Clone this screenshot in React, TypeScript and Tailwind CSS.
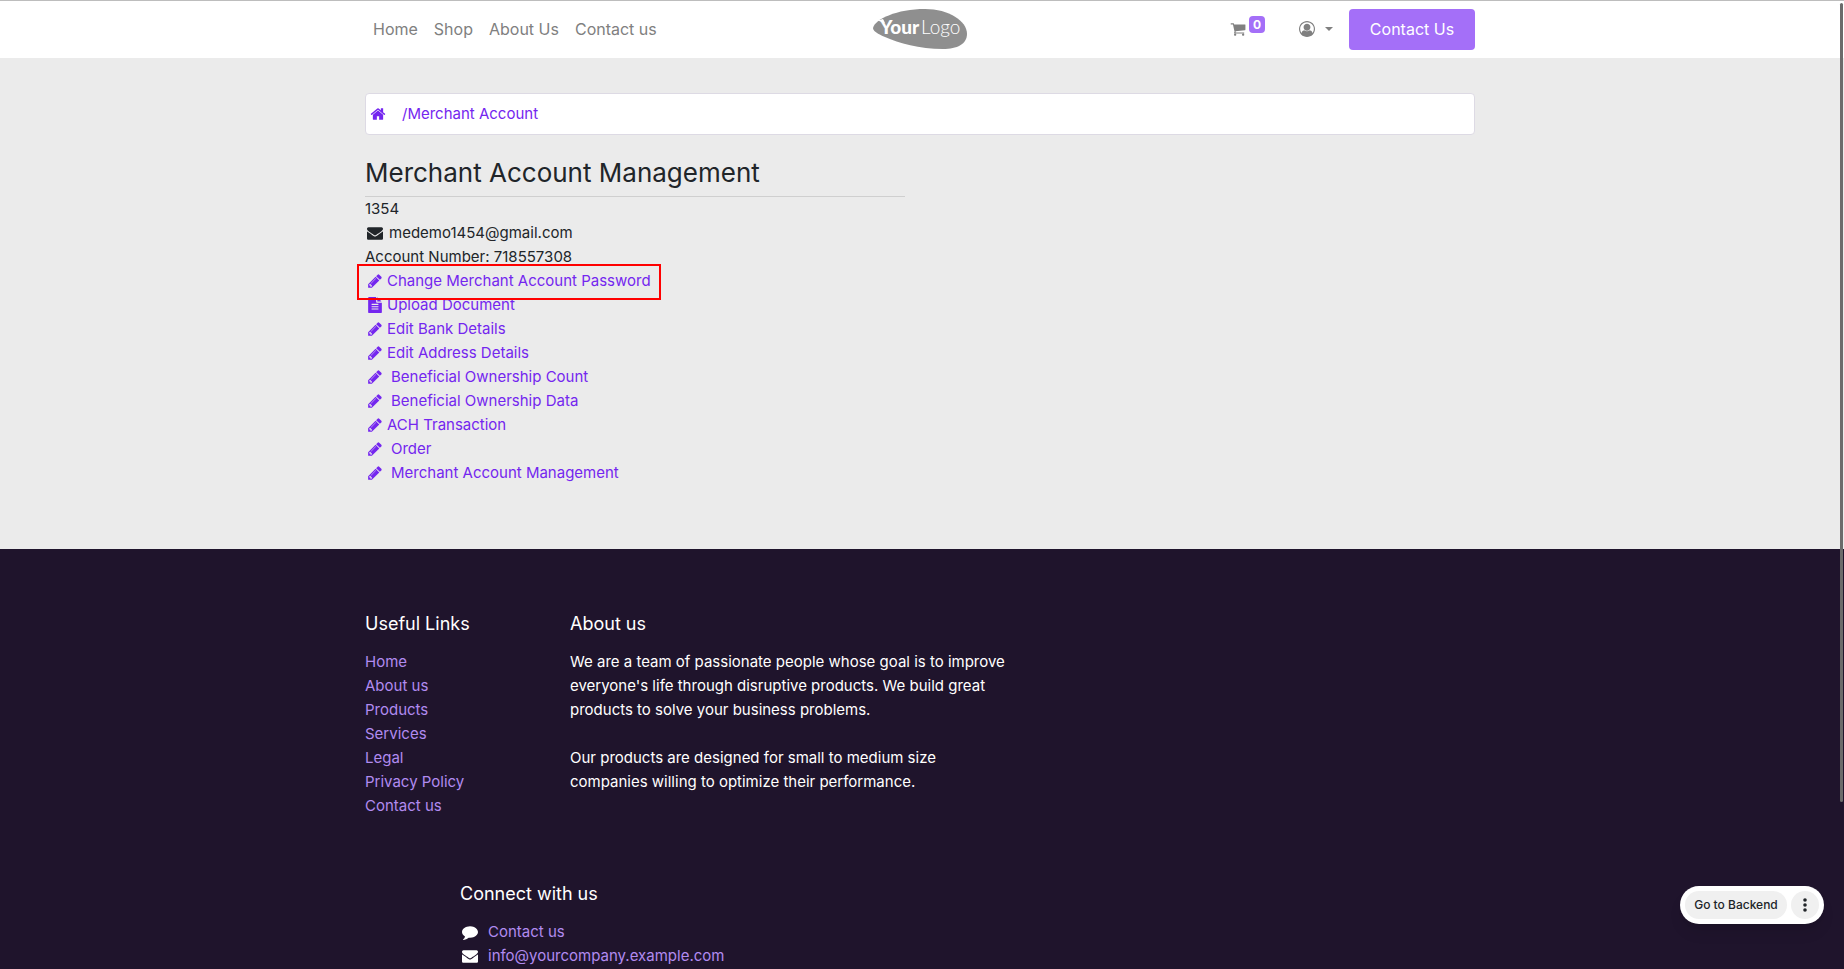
import type { ReactNode } from "react";

const ICONS = {
  cart: "M704 1536q0 52-38 90t-90 38-90-38-38-90 38-90 90-38 90 38 38 90zm896 0q0 52-38 90t-90 38-90-38-38-90 38-90 90-38 90 38 38 90zm128-1088v512q0 24-16.500 42.500t-40.500 21.500l-1044 122q13 60 13 70 0 16-24 64h920q26 0 45 19t19 45-19 45-45 19h-1024q-26 0-45-19t-19-45q0-11 8-31.500t16-36 21.500-40 15.500-29.500l-177-823h-204q-26 0-45-19t-19-45 19-45 45-19h256q16 0 28.500 6.500t19.500 15.500 13 24.500 8 26 5.500 29.500 4.500 26h1201q26 0 45 19t19 45z",
  home: "M1472 992v480q0 26-19 45t-45 19h-384v-384h-256v384h-384q-26 0-45-19t-19-45v-480q0-1 .5-3t.5-3l575-474 575 474q1 2 1 6zm223-69l-62 74q-8 9-21 11h-3q-13 0-21-7l-692-577-692 577q-12 8-24 7-13-2-21-11l-62-74q-8-10-7-23.500t11-21.500l719-599q32-26 76-26t76 26l244 204v-195q0-14 9-23t23-9h192q14 0 23 9t9 23v408l219 182q10 8 11 21.500t-7 23.500z",
  pencil: "M491 1536l91-91-235-235-91 91v107h128v128h107zm523-928q0-22-22-22-10 0-17 7l-542 542q-7 7-7 17 0 22 22 22 10 0 17-7l542-542q7-7 7-17zm-54-192l416 416-832 832h-416v-416zm683 96q0 53-37 90l-166 166-416-416 166-165q36-38 90-38 53 0 91 38l235 234q37 39 37 91z",
  envelope: "M1792 710v794q0 66-47 113t-113 47h-1472q-66 0-113-47t-47-113v-794q44 49 101 87 362 246 497 345 57 42 92.500 65.500t94.500 48 110 24.500h2q51 0 110-24.500t94.500-48 92.500-65.500q170-123 498-345 57-39 100-87zm0-294q0 79-49 151t-122 123q-376 261-468 325-10 7-42.500 30.500t-54 38-52 32.500-57.500 27-50 9h-2q-23 0-50-9t-57.500-27-52-32.500-54-38-42.500-30.500q-91-64-262-182.500t-205-142.500q-62-42-117-115.500t-55-136.500q0-78 41.500-130t118.500-52h1472q65 0 112.500 47t47.500 113z",
  file: "M1596 476q14 14 28 36h-472v-472q22 14 36 28zm-476 164h544v1056q0 40-28 68t-68 28h-1344q-40 0-68-28t-28-68v-1600q0-40 28-68t68-28h800v544q0 40 28 68t68 28zm160 736v-64q0-14-9-23t-23-9h-704q-14 0-23 9t-9 23v64q0 14 9 23t23 9h704q14 0 23-9t9-23zm0-256v-64q0-14-9-23t-23-9h-704q-14 0-23 9t-9 23v64q0 14 9 23t23 9h704q14 0 23-9t9-23zm0-256v-64q0-14-9-23t-23-9h-704q-14 0-23 9t-9 23v64q0 14 9 23t23 9h704q14 0 23-9t9-23z",
  comment: "M1792 896q0 174-120 321.500t-326 233-450 85.500q-70 0-145-8-198 175-460 242-49 14-114 22-17 2-30.500-9t-17.500-29v-1q-3-4-.5-12t2-10 4.500-9.500l6-9 7-8.500 8-9q7-8 31-34.500t34.500-38 31-39.500 32.500-51 27-59 26-76q-157-89-247.500-220t-90.500-281q0-130 71-248.500t191-204.500 286-136.500 348-50.500q244 0 450 85.500t326 233 120 321.500z",
  user: "M896 0q182 0 348 71t286 191 191 286 71 348q0 181-70.500 347t-190.500 286-286 191.500-349 71.500-349-71-285.500-191.500-190.500-286-71-347.500 71-348 191-286 286-191 348-71zm619 1351q149-205 149-455 0-156-61-298t-164-245-245-164-298-61-298 61-245 164-164 245-61 298q0 250 149 455 66-327 306-327 131 128 313 128t313-128q240 0 306 327zm-235-647q0-159-112.500-271.500t-271.500-112.500-271.500 112.500-112.500 271.500 112.500 271.500 271.500 112.500 271.500-112.500 112.500-271.500z",
};

type IconName = keyof typeof ICONS;

function Icon({ name }: { name: IconName }) {
  return (
    <svg viewBox="0 0 1792 1792" fill="currentColor" aria-hidden="true" className="size-4 shrink-0">
      <path d={ICONS[name]} />
    </svg>
  );
}

function IconSlot({ name }: { name: IconName }) {
  return (
    <span className="mr-0.5 flex w-5 shrink-0 justify-center">
      <Icon name={name} />
    </span>
  );
}

function Container({ children, className = "" }: { children: ReactNode; className?: string }) {
  return <div className={`mx-auto w-full max-w-[1140px] px-[15px] ${className}`}>{children}</div>;
}

function Logo() {
  return (
    <svg viewBox="0 0 94 40" className="h-10 w-[94px]" role="img" aria-label="Your Logo">
      <path
        d="M0 19C2 10 24 0 52 0C76 0 94 12 94 25C94 35 84 40 70 40C46 40 26 34 12 28C5 25 0 22 0 19Z"
        fill="#8f8f8f"
      />
      <path d="M3 12L10 10L12 14L6 12Z" fill="#fff" />
      <text x="7" y="25" fontSize="19" fontWeight="900" fill="#fff" fontFamily="Lato, sans-serif">
        Your
      </text>
      <text x="48" y="25" fontSize="19" fontWeight="300" fill="#fff" fontFamily="Lato, sans-serif">
        Logo
      </text>
    </svg>
  );
}

const NAV = ["Home", "Shop", "About Us", "Contact us"];

const ACTIONS: { label: string; icon: IconName; spaced?: boolean; marked?: boolean }[] = [
  { label: "Change Merchant Account Password", icon: "pencil", marked: true },
  { label: "Upload Document", icon: "file" },
  { label: "Edit Bank Details", icon: "pencil" },
  { label: "Edit Address Details", icon: "pencil" },
  { label: "Beneficial Ownership Count", icon: "pencil", spaced: true },
  { label: "Beneficial Ownership Data", icon: "pencil", spaced: true },
  { label: "ACH Transaction", icon: "pencil" },
  { label: "Order", icon: "pencil", spaced: true },
  { label: "Merchant Account Management", icon: "pencil", spaced: true },
];

const FOOTER_LINKS = ["Home", "About us", "Products", "Services", "Legal", "Privacy Policy", "Contact us"];

function Header() {
  return (
    <header className="border-t border-[#bdbdbd] bg-white pr-1 text-base">
      <Container className="grid h-[57px] grid-cols-[1fr_auto_1fr] items-center">
        <nav className="flex pb-0.5 text-[#808080]">
          {NAV.map((item) => (
            <a key={item} href="#" className="px-2">
              {item}
            </a>
          ))}
        </nav>
        <a href="#" className="flex pb-0.5">
          <Logo />
        </a>
        <div className="flex items-center justify-end text-[#808080]">
          <a href="#" aria-label="Cart" className="flex items-center gap-[3px] pr-[34px] pb-0.5">
            <Icon name="cart" />
            <span className="mb-2 flex h-[17px] w-4 items-center justify-center rounded bg-[#a46ff8] text-xs font-bold text-white">
              0
            </span>
          </a>
          <button type="button" aria-label="Account" className="flex items-center gap-[10px] pr-4 pb-0.5">
            <Icon name="user" />
            <svg viewBox="0 0 8 4" className="h-1 w-2" fill="currentColor" aria-hidden="true">
              <path d="M0 0H8L4 4Z" />
            </svg>
          </button>
          <a
            href="#"
            className="flex h-[41px] w-[126px] items-center justify-center rounded-[4px] bg-[#a46ff8] pb-0.5 text-white"
          >
            Contact Us
          </a>
        </div>
      </Container>
    </header>
  );
}

function Main() {
  return (
    <main className="bg-[#ebebeb] pt-[35px] pr-1 pb-16">
      <Container>
        <nav
          aria-label="Breadcrumb"
          className="flex h-[42px] items-center gap-4 rounded-[4px] border border-[#dddae4] bg-white px-1 text-[#7426ef]"
        >
          <a href="#" aria-label="Home">
            <Icon name="home" />
          </a>
          <a href="#">/Merchant Account</a>
        </nav>
        <section className="w-[540px] max-w-full pt-5">
          <h1 className="border-b border-[#cfcfcf] pb-[5px] text-[26px] leading-9">Merchant Account Management</h1>
          <p>1354</p>
          <p className="flex items-center gap-0.5">
            <IconSlot name="envelope" />
            medemo1454@gmail.com
          </p>
          <p>Account Number: 718557308</p>
          <ul className="text-[#7426ef]">
            {ACTIONS.map(({ label, icon, spaced, marked }) => (
              <li key={label} className="flex">
                <a href="#" className={`relative flex items-center ${spaced ? "gap-1" : ""}`}>
                  <IconSlot name={icon} />
                  {label}
                  {marked && (
                    <span className="absolute -top-[5px] -right-[10px] -bottom-[7px] -left-2 z-10 border-2 border-[#ff0000]" />
                  )}
                </a>
              </li>
            ))}
          </ul>
        </section>
      </Container>
    </main>
  );
}

function FooterHeading({ children }: { children: ReactNode }) {
  return <h2 className="pb-3 text-lg leading-7">{children}</h2>;
}

function Footer() {
  return (
    <footer className="bg-[#1f142c] pt-[61px] pr-1 pb-16 text-white">
      <Container>
        <div className="flex">
          <div className="w-[205px] shrink-0">
            <FooterHeading>Useful Links</FooterHeading>
            <ul className="text-[#b18bf0]">
              {FOOTER_LINKS.map((item) => (
                <li key={item}>
                  <a href="#">{item}</a>
                </li>
              ))}
            </ul>
          </div>
          <div>
            <FooterHeading>About us</FooterHeading>
            <p>
              We are a team of passionate people whose goal is to improve
              <br />
              everyone's life through disruptive products. We build great
              <br />
              products to solve your business problems.
            </p>
            <p className="pt-6">
              Our products are designed for small to medium size
              <br />
              companies willing to optimize their performance.
            </p>
          </div>
        </div>
        <div className="pt-[62px] pl-[95px]">
          <FooterHeading>Connect with us</FooterHeading>
          <ul>
            <li className="flex items-center gap-1.5">
              <IconSlot name="comment" />
              <a href="#" className="text-[#b18bf0]">
                Contact us
              </a>
            </li>
            <li className="flex items-center gap-1.5">
              <IconSlot name="envelope" />
              <a href="#" className="text-[#b18bf0]">
                info@yourcompany.example.com
              </a>
            </li>
          </ul>
        </div>
      </Container>
    </footer>
  );
}

export default function App() {
  return (
    <div className="relative h-screen overflow-hidden bg-[#1f142c] font-['Inter','Liberation_Sans',sans-serif] text-[15px] leading-6 text-[#212529]">
      <Header />
      <Main />
      <Footer />
      <div className="absolute right-5 bottom-[45px] flex gap-1 rounded-full bg-white p-[5px] shadow-lg">
        <button type="button" className="h-7 w-[102px] rounded-full bg-[#f0f0f0] text-xs font-medium">
          Go to Backend
        </button>
        <button type="button" aria-label="More" className="flex size-7 items-center justify-center rounded-full bg-[#f0f0f0]">
          <svg viewBox="0 0 4 14" className="h-[14px] w-1" fill="currentColor" aria-hidden="true">
            <circle cx="2" cy="2" r="1.8" />
            <circle cx="2" cy="7" r="1.8" />
            <circle cx="2" cy="12" r="1.8" />
          </svg>
        </button>
      </div>
      <div aria-hidden="true" className="absolute top-[3px] right-px h-[799px] w-[3px] rounded-full bg-[#6b6b6b]" />
    </div>
  );
}
